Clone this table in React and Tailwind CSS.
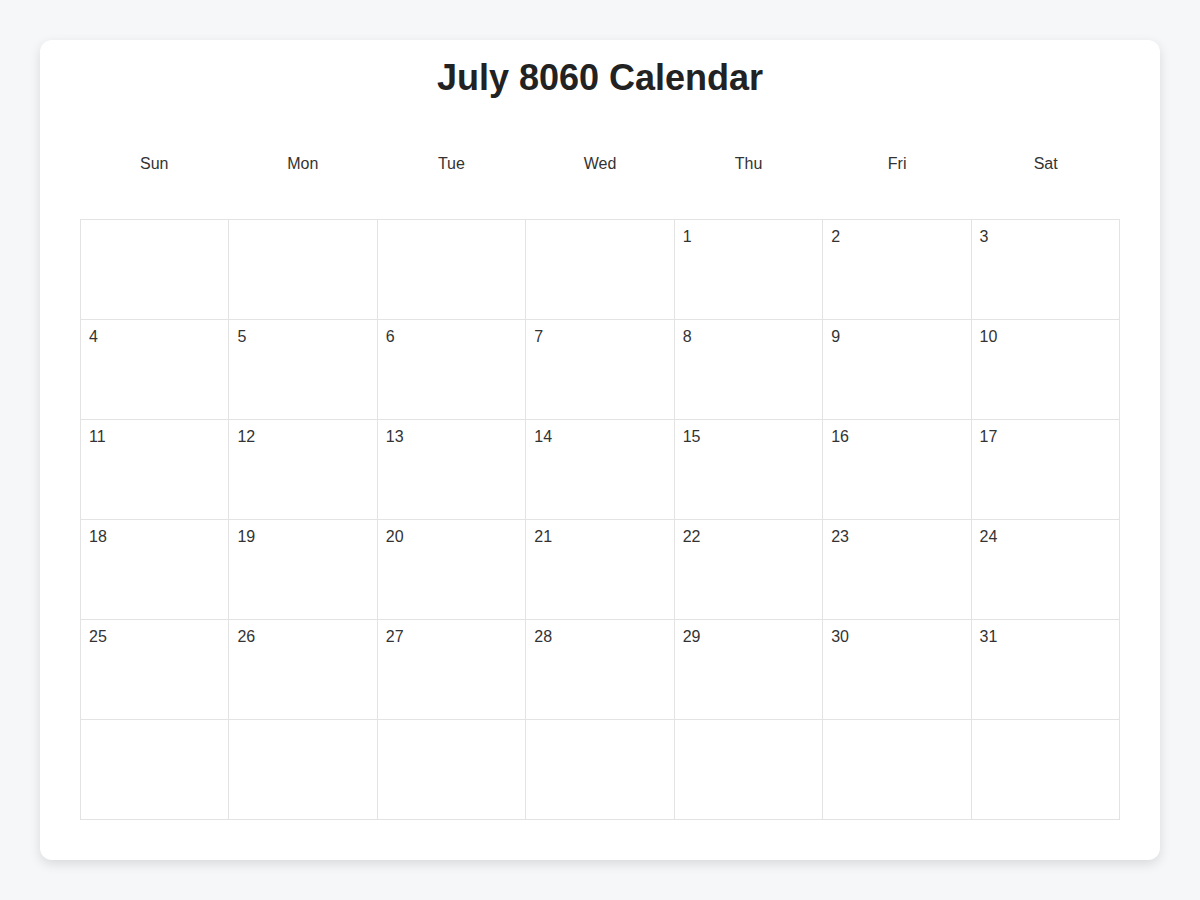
import React from 'react';

const days = ['Sun', 'Mon', 'Tue', 'Wed', 'Thu', 'Fri', 'Sat'];

// July 8060 starts on a Thursday, 31 days, 6 rows shown
const buildCells = () => {
  const cells = [];
  for (let i = 0; i < 4; i++) cells.push(null);
  for (let d = 1; d <= 31; d++) cells.push(d);
  while (cells.length < 42) cells.push(null);
  return cells;
};

const App = () => {
  const cells = buildCells();

  return (
    <div
      className="min-h-screen bg-[#f6f7f9] p-10"
      style={{ fontFamily: '"Liberation Sans", Arial, sans-serif' }}
    >
      <div className="bg-white rounded-xl shadow-[0_4px_12px_rgba(0,0,0,0.12)] px-10 pt-4 pb-10">
        <h1 className="text-center text-[36px] leading-[44px] font-bold text-[#222]">
          July 8060 Calendar
        </h1>

        <div className="grid grid-cols-7 mt-[44px] h-[40px] items-center">
          {days.map((day) => (
            <div key={day} className="text-center text-base text-[#333]">
              {day}
            </div>
          ))}
        </div>

        <div className="grid grid-cols-7 mt-[35px] border-t border-l border-[#e3e3e3]">
          {cells.map((d, i) => (
            <div
              key={i}
              className="h-[100px] border-r border-b border-[#e3e3e3] p-2 text-base leading-[18px] text-[#333]"
            >
              {d}
            </div>
          ))}
        </div>
      </div>
    </div>
  );
};

export default App;
